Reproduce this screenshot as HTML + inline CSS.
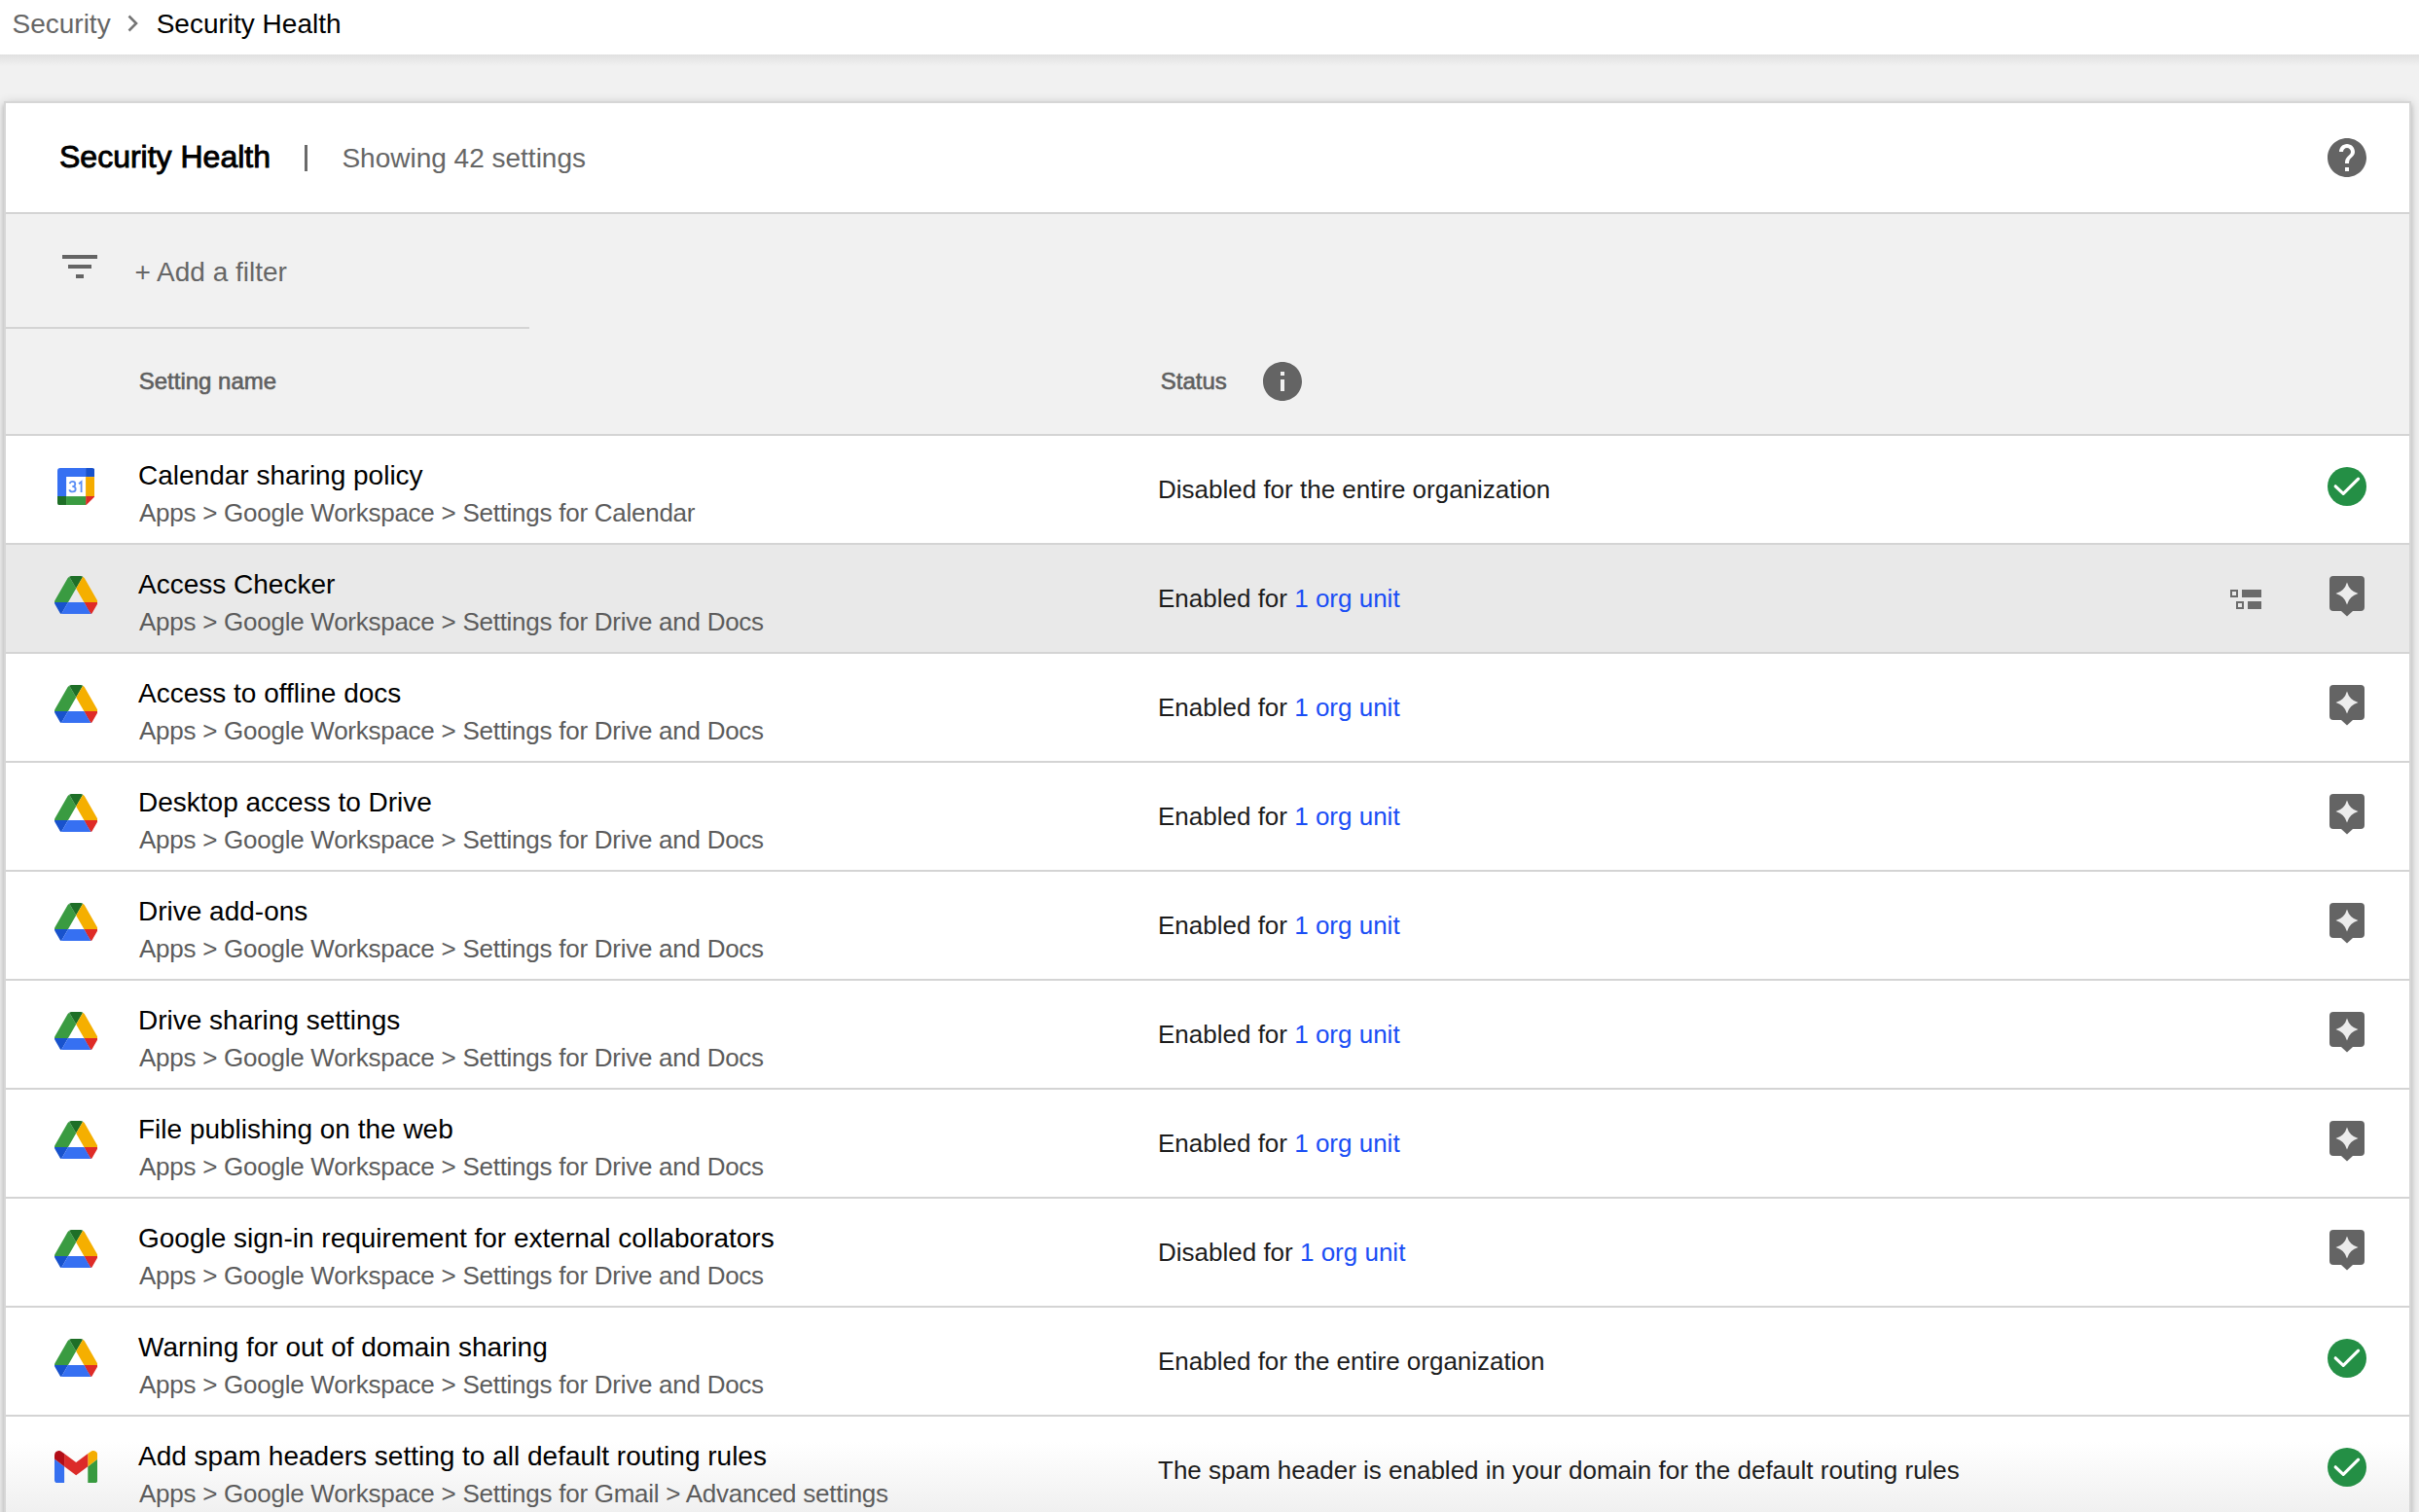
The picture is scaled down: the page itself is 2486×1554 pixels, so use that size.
<!DOCTYPE html>
<html><head><meta charset="utf-8">
<style>
html,body{margin:0;padding:0}
body{width:2486px;height:1554px;overflow:hidden;position:relative;background:#f1f1f1;font-family:"Liberation Sans",sans-serif}
.a{position:absolute;white-space:nowrap;line-height:1}
#hdr{position:absolute;left:0;top:0;width:2486px;height:56px;background:#fff}
#hdrsh{position:absolute;left:0;top:56px;width:2486px;height:12px;background:linear-gradient(#e0e0e0,#f1f1f1)}
#card{position:absolute;left:4px;top:104px;width:2470px;height:1500px;border:2px solid #d6d6d6;background:#fff;box-shadow:0 4px 4px 0 rgba(0,0,0,.14),0 6px 2px -4px rgba(0,0,0,.12),0 2px 10px 0 rgba(0,0,0,.2)}
</style></head><body>
<div id="hdr"></div>
<div id="hdrsh"></div>
<div class="a" style="left:12.50px;top:10.99px;font-size:28px;color:#666">Security</div>
<div class="a" style="left:160.70px;top:10.99px;font-size:28px;color:#000">Security Health</div>
<svg class="a" style="left:126px;top:12px" width="22" height="24" viewBox="0 0 22 24"><path d="M6.5 4.5 L14 12 L6.5 19.5" fill="none" stroke="#757575" stroke-width="2.6"/></svg><div id="card"><div class="a" style="left:55.00px;top:38.51px;font-size:32px;color:#000;-webkit-text-stroke:0.9px #000">Security Health</div>
<div class="a" style="left:306.5px;top:43px;width:3px;height:27px;background:#6a6a6a"></div><div class="a" style="left:345.40px;top:43.09px;font-size:28px;color:#666">Showing 42 settings</div>
<svg class="a" style="left:2381.8px;top:31.80000000000001px" width="48" height="48" viewBox="0 0 24 24"><path fill="#646464" d="M12 2C6.48 2 2 6.48 2 12s4.48 10 10 10 10-4.48 10-10S17.52 2 12 2zm1 17h-2v-2h2v2zm2.07-7.75l-.9.92C13.45 12.9 13 13.5 13 15h-2v-.5c0-1.1.45-2.1 1.17-2.83l1.24-1.26c.37-.36.59-.86.59-1.41 0-1.1-.9-2-2-2s-2 .9-2 2H8c0-2.21 1.79-4 4-4s4 1.79 4 4c0 .88-.36 1.68-.93 2.25z"/></svg><div class="a" style="left:0;top:112px;width:2470px;height:2px;background:#d4d4d4"></div><div class="a" style="left:0;top:114px;width:2470px;height:227px;background:#f1f1f1"></div><svg class="a" style="left:52px;top:143.6px" width="48" height="48" viewBox="0 0 24 24"><path fill="#646464" d="M10 18h4v-2h-4v2zM3 6v2h18V6H3zm3 7h12v-2H6v2z"/></svg><div class="a" style="left:132.50px;top:160.09px;font-size:28px;color:#666">+ Add a filter</div>
<div class="a" style="left:0;top:230px;width:538px;height:2px;background:#d4d4d4"></div><div class="a" style="left:136.70px;top:274.18px;font-size:24px;color:#5f5f5f;-webkit-text-stroke:0.6px #5f5f5f">Setting name</div>
<div class="a" style="left:1186.80px;top:274.18px;font-size:24px;color:#5f5f5f;-webkit-text-stroke:0.6px #5f5f5f">Status</div>
<svg class="a" style="left:1288px;top:262px" width="48" height="48" viewBox="0 0 24 24"><path fill="#646464" d="M12 2C6.48 2 2 6.48 2 12s4.48 10 10 10 10-4.48 10-10S17.52 2 12 2zm1 15h-2v-6h2v6zm0-8h-2V7h2v2z"/></svg><div class="a" style="left:0;top:340px;width:2470px;height:112px;background:#fff"></div>
<div class="a" style="left:0;top:340px;width:2470px;height:2px;background:#d4d4d4"></div>
<svg class="a" style="left:52.8px;top:374.9px;filter:blur(0.3px)" width="38.6" height="38.6" viewBox="0 0 38.6 38.6"><path d="M3 0H29.1V9.1H9.1V29.1H0V3A3 3 0 0 1 3 0Z" fill="#3670f2"/><path d="M29.1 0H35.6A3 3 0 0 1 38.6 3V9.1H29.1Z" fill="#1852cc"/><rect x="29.1" y="9.1" width="9.5" height="20" fill="#f5ac00"/><path d="M29.1 29.1H38.6L29.1 38.6Z" fill="#df2b27"/><rect x="9.1" y="29.1" width="20" height="9.5" fill="#3a9b41"/><path d="M0 29.1H9.1V38.6H3A3 3 0 0 1 0 35.6Z" fill="#1e6f27"/><path d="M12.7 16.1Q13.2 13.9 15.6 13.9Q18.3 13.9 18.3 16.4Q18.3 18.9 15.3 18.9Q18.7 18.9 18.7 21.7Q18.7 24.4 15.6 24.4Q12.9 24.4 12.3 22.2M22 16.2L24.6 14.2V25" fill="none" stroke="#5b8ef5" stroke-width="1.8"/></svg><div class="a" style="left:136.00px;top:368.59px;font-size:28px;color:#000">Calendar sharing policy</div>
<div class="a" style="left:137.00px;top:407.99px;font-size:26px;color:#5c5c5c;letter-spacing:-0.26px">Apps &gt; Google Workspace &gt; Settings for Calendar</div>
<div class="a" style="left:1184.00px;top:384.39px;font-size:26px;color:#1c1c1c">Disabled for the entire organization</div>
<svg class="a" style="left:2385.8px;top:373.8px" width="40" height="40" viewBox="0 0 40 40"><circle cx="20" cy="20" r="20" fill="#248f45"/><path d="M8.2 19.8 L16.2 27.4 L31.6 12.1" fill="none" stroke="#fff" stroke-width="3.2" stroke-linecap="round" stroke-linejoin="round"/></svg><div class="a" style="left:0;top:452px;width:2470px;height:112px;background:#e9e9e9"></div>
<div class="a" style="left:0;top:452px;width:2470px;height:2px;background:#d4d4d4"></div>
<svg class="a" style="left:49.9px;top:485.5px;filter:blur(0.3px)" width="44.4" height="39.8" viewBox="0 0 87.3 78"><path d="m6.6 66.85 3.85 6.65c.8 1.4 1.95 2.5 3.3 3.3l13.75-23.8h-27.5c0 1.55.4 3.1 1.2 4.5z" fill="#1852cc"/><path d="m43.65 25-13.75-23.8c-1.35.8-2.5 1.9-3.3 3.3l-25.4 44a9.06 9.06 0 0 0 -1.2 4.5h27.5z" fill="#3a9b41"/><path d="m73.55 76.8c1.35-.8 2.5-1.9 3.3-3.3l1.6-2.75 7.65-13.25c.8-1.4 1.2-2.95 1.2-4.5h-27.502l5.852 11.5z" fill="#df2b27"/><path d="m43.65 25 13.75-23.8c-1.35-.8-2.9-1.2-4.5-1.2h-18.5c-1.6 0-3.15.45-4.5 1.2z" fill="#1e6f27"/><path d="m59.8 53h-32.3l-13.75 23.8c1.35.8 2.9 1.2 4.5 1.2h50.8c1.6 0 3.15-.45 4.5-1.2z" fill="#3670f2"/><path d="m73.4 26.5-12.7-22c-.8-1.4-1.95-2.5-3.3-3.3l-13.75 23.8 16.15 28h27.45c0-1.55-.4-3.1-1.2-4.5z" fill="#f5af00"/></svg><div class="a" style="left:136.00px;top:480.59px;font-size:28px;color:#000">Access Checker</div>
<div class="a" style="left:137.00px;top:519.99px;font-size:26px;color:#5c5c5c;letter-spacing:-0.26px">Apps &gt; Google Workspace &gt; Settings for Drive and Docs</div>
<div class="a" style="left:1184.00px;top:496.39px;font-size:26px;color:#1c1c1c">Enabled for <span style="color:#1a4ef5">1 org unit</span></div>
<svg class="a" style="left:2388px;top:486px" width="36" height="42" viewBox="0 0 36 42"><path fill="#646464" d="M4 0H32A4 4 0 0 1 36 4V32A4 4 0 0 1 32 36H24L18 41.5L12 36H4A4 4 0 0 1 0 32V4A4 4 0 0 1 4 0Z"/><path fill="#ececec" d="M18 6.5Q20.5 15.5 29.5 18Q20.5 20.5 18 29.5Q15.5 20.5 6.5 18Q15.5 15.5 18 6.5Z"/></svg><svg class="a" style="left:2286px;top:500px" width="34" height="22" viewBox="0 0 34 22"><rect x="1" y="1" width="6" height="6" fill="none" stroke="#6b6b6b" stroke-width="2"/><rect x="12" y="0" width="20" height="8" fill="#6b6b6b"/><rect x="7" y="13" width="6" height="6" fill="none" stroke="#6b6b6b" stroke-width="2"/><rect x="18" y="12" width="14" height="8" fill="#6b6b6b"/></svg><div class="a" style="left:0;top:564px;width:2470px;height:112px;background:#fff"></div>
<div class="a" style="left:0;top:564px;width:2470px;height:2px;background:#d4d4d4"></div>
<svg class="a" style="left:49.9px;top:597.5px;filter:blur(0.3px)" width="44.4" height="39.8" viewBox="0 0 87.3 78"><path d="m6.6 66.85 3.85 6.65c.8 1.4 1.95 2.5 3.3 3.3l13.75-23.8h-27.5c0 1.55.4 3.1 1.2 4.5z" fill="#1852cc"/><path d="m43.65 25-13.75-23.8c-1.35.8-2.5 1.9-3.3 3.3l-25.4 44a9.06 9.06 0 0 0 -1.2 4.5h27.5z" fill="#3a9b41"/><path d="m73.55 76.8c1.35-.8 2.5-1.9 3.3-3.3l1.6-2.75 7.65-13.25c.8-1.4 1.2-2.95 1.2-4.5h-27.502l5.852 11.5z" fill="#df2b27"/><path d="m43.65 25 13.75-23.8c-1.35-.8-2.9-1.2-4.5-1.2h-18.5c-1.6 0-3.15.45-4.5 1.2z" fill="#1e6f27"/><path d="m59.8 53h-32.3l-13.75 23.8c1.35.8 2.9 1.2 4.5 1.2h50.8c1.6 0 3.15-.45 4.5-1.2z" fill="#3670f2"/><path d="m73.4 26.5-12.7-22c-.8-1.4-1.95-2.5-3.3-3.3l-13.75 23.8 16.15 28h27.45c0-1.55-.4-3.1-1.2-4.5z" fill="#f5af00"/></svg><div class="a" style="left:136.00px;top:592.59px;font-size:28px;color:#000">Access to offline docs</div>
<div class="a" style="left:137.00px;top:631.99px;font-size:26px;color:#5c5c5c;letter-spacing:-0.26px">Apps &gt; Google Workspace &gt; Settings for Drive and Docs</div>
<div class="a" style="left:1184.00px;top:608.39px;font-size:26px;color:#1c1c1c">Enabled for <span style="color:#1a4ef5">1 org unit</span></div>
<svg class="a" style="left:2388px;top:598px" width="36" height="42" viewBox="0 0 36 42"><path fill="#646464" d="M4 0H32A4 4 0 0 1 36 4V32A4 4 0 0 1 32 36H24L18 41.5L12 36H4A4 4 0 0 1 0 32V4A4 4 0 0 1 4 0Z"/><path fill="#ececec" d="M18 6.5Q20.5 15.5 29.5 18Q20.5 20.5 18 29.5Q15.5 20.5 6.5 18Q15.5 15.5 18 6.5Z"/></svg><div class="a" style="left:0;top:676px;width:2470px;height:112px;background:#fff"></div>
<div class="a" style="left:0;top:676px;width:2470px;height:2px;background:#d4d4d4"></div>
<svg class="a" style="left:49.9px;top:709.5px;filter:blur(0.3px)" width="44.4" height="39.8" viewBox="0 0 87.3 78"><path d="m6.6 66.85 3.85 6.65c.8 1.4 1.95 2.5 3.3 3.3l13.75-23.8h-27.5c0 1.55.4 3.1 1.2 4.5z" fill="#1852cc"/><path d="m43.65 25-13.75-23.8c-1.35.8-2.5 1.9-3.3 3.3l-25.4 44a9.06 9.06 0 0 0 -1.2 4.5h27.5z" fill="#3a9b41"/><path d="m73.55 76.8c1.35-.8 2.5-1.9 3.3-3.3l1.6-2.75 7.65-13.25c.8-1.4 1.2-2.95 1.2-4.5h-27.502l5.852 11.5z" fill="#df2b27"/><path d="m43.65 25 13.75-23.8c-1.35-.8-2.9-1.2-4.5-1.2h-18.5c-1.6 0-3.15.45-4.5 1.2z" fill="#1e6f27"/><path d="m59.8 53h-32.3l-13.75 23.8c1.35.8 2.9 1.2 4.5 1.2h50.8c1.6 0 3.15-.45 4.5-1.2z" fill="#3670f2"/><path d="m73.4 26.5-12.7-22c-.8-1.4-1.95-2.5-3.3-3.3l-13.75 23.8 16.15 28h27.45c0-1.55-.4-3.1-1.2-4.5z" fill="#f5af00"/></svg><div class="a" style="left:136.00px;top:704.59px;font-size:28px;color:#000">Desktop access to Drive</div>
<div class="a" style="left:137.00px;top:743.99px;font-size:26px;color:#5c5c5c;letter-spacing:-0.26px">Apps &gt; Google Workspace &gt; Settings for Drive and Docs</div>
<div class="a" style="left:1184.00px;top:720.39px;font-size:26px;color:#1c1c1c">Enabled for <span style="color:#1a4ef5">1 org unit</span></div>
<svg class="a" style="left:2388px;top:710px" width="36" height="42" viewBox="0 0 36 42"><path fill="#646464" d="M4 0H32A4 4 0 0 1 36 4V32A4 4 0 0 1 32 36H24L18 41.5L12 36H4A4 4 0 0 1 0 32V4A4 4 0 0 1 4 0Z"/><path fill="#ececec" d="M18 6.5Q20.5 15.5 29.5 18Q20.5 20.5 18 29.5Q15.5 20.5 6.5 18Q15.5 15.5 18 6.5Z"/></svg><div class="a" style="left:0;top:788px;width:2470px;height:112px;background:#fff"></div>
<div class="a" style="left:0;top:788px;width:2470px;height:2px;background:#d4d4d4"></div>
<svg class="a" style="left:49.9px;top:821.5px;filter:blur(0.3px)" width="44.4" height="39.8" viewBox="0 0 87.3 78"><path d="m6.6 66.85 3.85 6.65c.8 1.4 1.95 2.5 3.3 3.3l13.75-23.8h-27.5c0 1.55.4 3.1 1.2 4.5z" fill="#1852cc"/><path d="m43.65 25-13.75-23.8c-1.35.8-2.5 1.9-3.3 3.3l-25.4 44a9.06 9.06 0 0 0 -1.2 4.5h27.5z" fill="#3a9b41"/><path d="m73.55 76.8c1.35-.8 2.5-1.9 3.3-3.3l1.6-2.75 7.65-13.25c.8-1.4 1.2-2.95 1.2-4.5h-27.502l5.852 11.5z" fill="#df2b27"/><path d="m43.65 25 13.75-23.8c-1.35-.8-2.9-1.2-4.5-1.2h-18.5c-1.6 0-3.15.45-4.5 1.2z" fill="#1e6f27"/><path d="m59.8 53h-32.3l-13.75 23.8c1.35.8 2.9 1.2 4.5 1.2h50.8c1.6 0 3.15-.45 4.5-1.2z" fill="#3670f2"/><path d="m73.4 26.5-12.7-22c-.8-1.4-1.95-2.5-3.3-3.3l-13.75 23.8 16.15 28h27.45c0-1.55-.4-3.1-1.2-4.5z" fill="#f5af00"/></svg><div class="a" style="left:136.00px;top:816.59px;font-size:28px;color:#000">Drive add-ons</div>
<div class="a" style="left:137.00px;top:855.99px;font-size:26px;color:#5c5c5c;letter-spacing:-0.26px">Apps &gt; Google Workspace &gt; Settings for Drive and Docs</div>
<div class="a" style="left:1184.00px;top:832.39px;font-size:26px;color:#1c1c1c">Enabled for <span style="color:#1a4ef5">1 org unit</span></div>
<svg class="a" style="left:2388px;top:822px" width="36" height="42" viewBox="0 0 36 42"><path fill="#646464" d="M4 0H32A4 4 0 0 1 36 4V32A4 4 0 0 1 32 36H24L18 41.5L12 36H4A4 4 0 0 1 0 32V4A4 4 0 0 1 4 0Z"/><path fill="#ececec" d="M18 6.5Q20.5 15.5 29.5 18Q20.5 20.5 18 29.5Q15.5 20.5 6.5 18Q15.5 15.5 18 6.5Z"/></svg><div class="a" style="left:0;top:900px;width:2470px;height:112px;background:#fff"></div>
<div class="a" style="left:0;top:900px;width:2470px;height:2px;background:#d4d4d4"></div>
<svg class="a" style="left:49.9px;top:933.5px;filter:blur(0.3px)" width="44.4" height="39.8" viewBox="0 0 87.3 78"><path d="m6.6 66.85 3.85 6.65c.8 1.4 1.95 2.5 3.3 3.3l13.75-23.8h-27.5c0 1.55.4 3.1 1.2 4.5z" fill="#1852cc"/><path d="m43.65 25-13.75-23.8c-1.35.8-2.5 1.9-3.3 3.3l-25.4 44a9.06 9.06 0 0 0 -1.2 4.5h27.5z" fill="#3a9b41"/><path d="m73.55 76.8c1.35-.8 2.5-1.9 3.3-3.3l1.6-2.75 7.65-13.25c.8-1.4 1.2-2.95 1.2-4.5h-27.502l5.852 11.5z" fill="#df2b27"/><path d="m43.65 25 13.75-23.8c-1.35-.8-2.9-1.2-4.5-1.2h-18.5c-1.6 0-3.15.45-4.5 1.2z" fill="#1e6f27"/><path d="m59.8 53h-32.3l-13.75 23.8c1.35.8 2.9 1.2 4.5 1.2h50.8c1.6 0 3.15-.45 4.5-1.2z" fill="#3670f2"/><path d="m73.4 26.5-12.7-22c-.8-1.4-1.95-2.5-3.3-3.3l-13.75 23.8 16.15 28h27.45c0-1.55-.4-3.1-1.2-4.5z" fill="#f5af00"/></svg><div class="a" style="left:136.00px;top:928.59px;font-size:28px;color:#000">Drive sharing settings</div>
<div class="a" style="left:137.00px;top:967.99px;font-size:26px;color:#5c5c5c;letter-spacing:-0.26px">Apps &gt; Google Workspace &gt; Settings for Drive and Docs</div>
<div class="a" style="left:1184.00px;top:944.39px;font-size:26px;color:#1c1c1c">Enabled for <span style="color:#1a4ef5">1 org unit</span></div>
<svg class="a" style="left:2388px;top:934px" width="36" height="42" viewBox="0 0 36 42"><path fill="#646464" d="M4 0H32A4 4 0 0 1 36 4V32A4 4 0 0 1 32 36H24L18 41.5L12 36H4A4 4 0 0 1 0 32V4A4 4 0 0 1 4 0Z"/><path fill="#ececec" d="M18 6.5Q20.5 15.5 29.5 18Q20.5 20.5 18 29.5Q15.5 20.5 6.5 18Q15.5 15.5 18 6.5Z"/></svg><div class="a" style="left:0;top:1012px;width:2470px;height:112px;background:#fff"></div>
<div class="a" style="left:0;top:1012px;width:2470px;height:2px;background:#d4d4d4"></div>
<svg class="a" style="left:49.9px;top:1045.5px;filter:blur(0.3px)" width="44.4" height="39.8" viewBox="0 0 87.3 78"><path d="m6.6 66.85 3.85 6.65c.8 1.4 1.95 2.5 3.3 3.3l13.75-23.8h-27.5c0 1.55.4 3.1 1.2 4.5z" fill="#1852cc"/><path d="m43.65 25-13.75-23.8c-1.35.8-2.5 1.9-3.3 3.3l-25.4 44a9.06 9.06 0 0 0 -1.2 4.5h27.5z" fill="#3a9b41"/><path d="m73.55 76.8c1.35-.8 2.5-1.9 3.3-3.3l1.6-2.75 7.65-13.25c.8-1.4 1.2-2.95 1.2-4.5h-27.502l5.852 11.5z" fill="#df2b27"/><path d="m43.65 25 13.75-23.8c-1.35-.8-2.9-1.2-4.5-1.2h-18.5c-1.6 0-3.15.45-4.5 1.2z" fill="#1e6f27"/><path d="m59.8 53h-32.3l-13.75 23.8c1.35.8 2.9 1.2 4.5 1.2h50.8c1.6 0 3.15-.45 4.5-1.2z" fill="#3670f2"/><path d="m73.4 26.5-12.7-22c-.8-1.4-1.95-2.5-3.3-3.3l-13.75 23.8 16.15 28h27.45c0-1.55-.4-3.1-1.2-4.5z" fill="#f5af00"/></svg><div class="a" style="left:136.00px;top:1040.59px;font-size:28px;color:#000">File publishing on the web</div>
<div class="a" style="left:137.00px;top:1079.99px;font-size:26px;color:#5c5c5c;letter-spacing:-0.26px">Apps &gt; Google Workspace &gt; Settings for Drive and Docs</div>
<div class="a" style="left:1184.00px;top:1056.39px;font-size:26px;color:#1c1c1c">Enabled for <span style="color:#1a4ef5">1 org unit</span></div>
<svg class="a" style="left:2388px;top:1046px" width="36" height="42" viewBox="0 0 36 42"><path fill="#646464" d="M4 0H32A4 4 0 0 1 36 4V32A4 4 0 0 1 32 36H24L18 41.5L12 36H4A4 4 0 0 1 0 32V4A4 4 0 0 1 4 0Z"/><path fill="#ececec" d="M18 6.5Q20.5 15.5 29.5 18Q20.5 20.5 18 29.5Q15.5 20.5 6.5 18Q15.5 15.5 18 6.5Z"/></svg><div class="a" style="left:0;top:1124px;width:2470px;height:112px;background:#fff"></div>
<div class="a" style="left:0;top:1124px;width:2470px;height:2px;background:#d4d4d4"></div>
<svg class="a" style="left:49.9px;top:1157.5px;filter:blur(0.3px)" width="44.4" height="39.8" viewBox="0 0 87.3 78"><path d="m6.6 66.85 3.85 6.65c.8 1.4 1.95 2.5 3.3 3.3l13.75-23.8h-27.5c0 1.55.4 3.1 1.2 4.5z" fill="#1852cc"/><path d="m43.65 25-13.75-23.8c-1.35.8-2.5 1.9-3.3 3.3l-25.4 44a9.06 9.06 0 0 0 -1.2 4.5h27.5z" fill="#3a9b41"/><path d="m73.55 76.8c1.35-.8 2.5-1.9 3.3-3.3l1.6-2.75 7.65-13.25c.8-1.4 1.2-2.95 1.2-4.5h-27.502l5.852 11.5z" fill="#df2b27"/><path d="m43.65 25 13.75-23.8c-1.35-.8-2.9-1.2-4.5-1.2h-18.5c-1.6 0-3.15.45-4.5 1.2z" fill="#1e6f27"/><path d="m59.8 53h-32.3l-13.75 23.8c1.35.8 2.9 1.2 4.5 1.2h50.8c1.6 0 3.15-.45 4.5-1.2z" fill="#3670f2"/><path d="m73.4 26.5-12.7-22c-.8-1.4-1.95-2.5-3.3-3.3l-13.75 23.8 16.15 28h27.45c0-1.55-.4-3.1-1.2-4.5z" fill="#f5af00"/></svg><div class="a" style="left:136.00px;top:1152.59px;font-size:28px;color:#000">Google sign-in requirement for external collaborators</div>
<div class="a" style="left:137.00px;top:1191.99px;font-size:26px;color:#5c5c5c;letter-spacing:-0.26px">Apps &gt; Google Workspace &gt; Settings for Drive and Docs</div>
<div class="a" style="left:1184.00px;top:1168.39px;font-size:26px;color:#1c1c1c">Disabled for <span style="color:#1a4ef5">1 org unit</span></div>
<svg class="a" style="left:2388px;top:1158px" width="36" height="42" viewBox="0 0 36 42"><path fill="#646464" d="M4 0H32A4 4 0 0 1 36 4V32A4 4 0 0 1 32 36H24L18 41.5L12 36H4A4 4 0 0 1 0 32V4A4 4 0 0 1 4 0Z"/><path fill="#ececec" d="M18 6.5Q20.5 15.5 29.5 18Q20.5 20.5 18 29.5Q15.5 20.5 6.5 18Q15.5 15.5 18 6.5Z"/></svg><div class="a" style="left:0;top:1236px;width:2470px;height:112px;background:#fff"></div>
<div class="a" style="left:0;top:1236px;width:2470px;height:2px;background:#d4d4d4"></div>
<svg class="a" style="left:49.9px;top:1269.5px;filter:blur(0.3px)" width="44.4" height="39.8" viewBox="0 0 87.3 78"><path d="m6.6 66.85 3.85 6.65c.8 1.4 1.95 2.5 3.3 3.3l13.75-23.8h-27.5c0 1.55.4 3.1 1.2 4.5z" fill="#1852cc"/><path d="m43.65 25-13.75-23.8c-1.35.8-2.5 1.9-3.3 3.3l-25.4 44a9.06 9.06 0 0 0 -1.2 4.5h27.5z" fill="#3a9b41"/><path d="m73.55 76.8c1.35-.8 2.5-1.9 3.3-3.3l1.6-2.75 7.65-13.25c.8-1.4 1.2-2.95 1.2-4.5h-27.502l5.852 11.5z" fill="#df2b27"/><path d="m43.65 25 13.75-23.8c-1.35-.8-2.9-1.2-4.5-1.2h-18.5c-1.6 0-3.15.45-4.5 1.2z" fill="#1e6f27"/><path d="m59.8 53h-32.3l-13.75 23.8c1.35.8 2.9 1.2 4.5 1.2h50.8c1.6 0 3.15-.45 4.5-1.2z" fill="#3670f2"/><path d="m73.4 26.5-12.7-22c-.8-1.4-1.95-2.5-3.3-3.3l-13.75 23.8 16.15 28h27.45c0-1.55-.4-3.1-1.2-4.5z" fill="#f5af00"/></svg><div class="a" style="left:136.00px;top:1264.59px;font-size:28px;color:#000">Warning for out of domain sharing</div>
<div class="a" style="left:137.00px;top:1303.99px;font-size:26px;color:#5c5c5c;letter-spacing:-0.26px">Apps &gt; Google Workspace &gt; Settings for Drive and Docs</div>
<div class="a" style="left:1184.00px;top:1280.39px;font-size:26px;color:#1c1c1c">Enabled for the entire organization</div>
<svg class="a" style="left:2385.8px;top:1269.8px" width="40" height="40" viewBox="0 0 40 40"><circle cx="20" cy="20" r="20" fill="#248f45"/><path d="M8.2 19.8 L16.2 27.4 L31.6 12.1" fill="none" stroke="#fff" stroke-width="3.2" stroke-linecap="round" stroke-linejoin="round"/></svg><div class="a" style="left:0;top:1348px;width:2470px;height:112px;background:linear-gradient(#fff 0px,#fff 28px,#f0f0f0 100px)"></div>
<div class="a" style="left:0;top:1348px;width:2470px;height:2px;background:#d4d4d4"></div>
<svg class="a" style="left:49.8px;top:1384.8px;filter:blur(0.3px)" width="44.4" height="33.3" viewBox="52 42 88 66"><path fill="#3670f0" d="M58 108h14V74L52 59v43c0 3.32 2.69 6 6 6"/><path fill="#379a3f" d="M120 108h14c3.32 0 6-2.69 6-6V59l-20 15"/><path fill="#f4ad00" d="M120 48v26l20-15v-8c0-7.42-8.47-11.65-14.4-7.2"/><path fill="#dc2b29" d="M72 74V48l24 18 24-18v26L96 92"/><path fill="#b20d17" d="M52 51v8l20 15V48l-5.6-4.2c-5.94-4.45-14.4-.22-14.4 7.2"/></svg><div class="a" style="left:136.00px;top:1376.59px;font-size:28px;color:#000">Add spam headers setting to all default routing rules</div>
<div class="a" style="left:137.00px;top:1415.99px;font-size:26px;color:#5c5c5c;letter-spacing:-0.26px">Apps &gt; Google Workspace &gt; Settings for Gmail &gt; Advanced settings</div>
<div class="a" style="left:1184.00px;top:1392.39px;font-size:26px;color:#1c1c1c">The spam header is enabled in your domain for the default routing rules</div>
<svg class="a" style="left:2385.8px;top:1381.8px" width="40" height="40" viewBox="0 0 40 40"><circle cx="20" cy="20" r="20" fill="#248f45"/><path d="M8.2 19.8 L16.2 27.4 L31.6 12.1" fill="none" stroke="#fff" stroke-width="3.2" stroke-linecap="round" stroke-linejoin="round"/></svg></div></body></html>
